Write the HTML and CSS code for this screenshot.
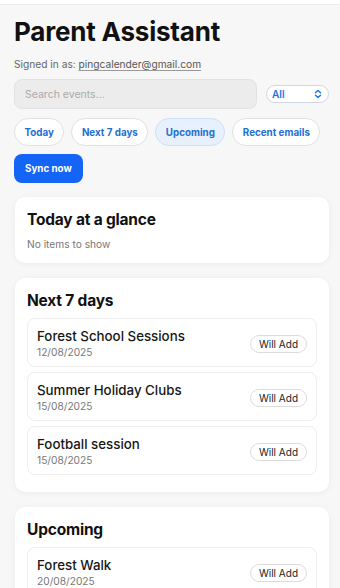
FILE: index.html
```html
<!DOCTYPE html>
<html lang="en">
<head>
<meta charset="utf-8">
<title>Parent Assistant</title>
<link rel="stylesheet" href="styles.css">
</head>
<body>
<div class="topbar"></div>
<main class="page">
  <h1 class="title">Parent Assistant</h1>
  <p class="signed">Signed in as: <a class="email" href="#">pingcalender@gmail.com</a></p>
  <div class="search-row">
    <input class="search" type="text" placeholder="Search events...">
    <div class="select">
      <span>All</span>
      <svg width="8" height="10" viewBox="0 0 8 10" fill="none" stroke="#1a73e8" stroke-width="1.4" stroke-linecap="round" stroke-linejoin="round"><path d="M1.5 3.8 4 1.5 6.5 3.8"/><path d="M1.5 6.2 4 8.5 6.5 6.2"/></svg>
    </div>
  </div>
  <div class="pills">
    <button class="pill">Today</button>
    <button class="pill">Next 7 days</button>
    <button class="pill active">Upcoming</button>
    <button class="pill">Recent emails</button>
  </div>
  <button class="sync">Sync now</button>

  <section class="card">
    <h2 class="card-title">Today at a glance</h2>
    <p class="empty">No items to show</p>
  </section>

  <section class="card">
    <h2 class="card-title">Next 7 days</h2>
    <div class="item">
      <div class="item-text"><div class="item-name">Forest School Sessions</div><div class="item-date">12/08/2025</div></div>
      <span class="badge">Will Add</span>
    </div>
    <div class="item">
      <div class="item-text"><div class="item-name">Summer Holiday Clubs</div><div class="item-date">15/08/2025</div></div>
      <span class="badge">Will Add</span>
    </div>
    <div class="item">
      <div class="item-text"><div class="item-name">Football session</div><div class="item-date">15/08/2025</div></div>
      <span class="badge">Will Add</span>
    </div>
  </section>

  <section class="card">
    <h2 class="card-title">Upcoming</h2>
    <div class="item">
      <div class="item-text"><div class="item-name">Forest Walk</div><div class="item-date">20/08/2025</div></div>
      <span class="badge">Will Add</span>
    </div>
  </section>
</main>
</body>
</html>
```
FILE: styles.css
```css
* { box-sizing: border-box; }
html, body { margin: 0; padding: 0; }
body {
  background: #f7f7f7;
  font-family: Inter, "Noto Sans", sans-serif;
  color: #111;
  height: 588px;
  overflow: hidden;
}
.topbar {
  height: 5px;
  background: #ffffff;
  border-bottom: 1px solid #ececec;
}
.page {
  padding: 0 11px 0 14px;
}
.title {
  margin: 10px 0 0;
  font-size: 26px;
  line-height: 34px;
  font-weight: 700;
  letter-spacing: -0.2px;
  color: #111;
}
.signed {
  margin: 7px 0 0;
  font-size: 10.2px;
  line-height: 16px;
  color: #666;
}
.email {
  color: #555;
  text-decoration: underline;
  text-decoration-color: #999;
  text-underline-offset: 2px;
}
.search-row {
  display: flex;
  align-items: center;
  gap: 9px;
  margin-top: 7px;
}
.search {
  width: 243px;
  height: 30px;
  border: 1px solid #e2e2e2;
  background: #ececec;
  border-radius: 8px;
  padding: 0 10px;
  font-family: inherit;
  font-size: 10.5px;
  color: #333;
  outline: none;
}
.search::placeholder { color: #aaa; }
.select {
  flex: 1;
  height: 18px;
  border: 1px solid #cfd8e3;
  border-radius: 9px;
  background: #fff;
  display: flex;
  align-items: center;
  justify-content: space-between;
  padding: 0 6px 0 5px;
  font-size: 10px;
  font-weight: 600;
  color: #1a73e8;
}
.pills {
  display: flex;
  gap: 7px;
  margin-top: 9px;
}
.pill {
  flex-shrink: 0;
  white-space: nowrap;
  height: 28px;
  padding: 0 9.5px;
  border: 1px solid #e1e1e1;
  background: #fff;
  border-radius: 14px;
  font-family: inherit;
  font-size: 9.8px;
  font-weight: 700;
  color: #1f6fd1;
}
.pill.active {
  background: #e7f0fd;
  border-color: #cfe0f7;
}
.sync {
  display: block;
  margin-top: 8px;
  height: 29px;
  padding: 0 11px;
  border: none;
  border-radius: 8px;
  background: #1464f6;
  color: #fff;
  font-family: inherit;
  font-size: 9.8px;
  font-weight: 700;
}
.card {
  margin: 14px 0 0 1px;
  background: #fff;
  border-radius: 10px;
  padding: 12px 12px 12px;
  box-shadow: 0 1px 6px rgba(0, 0, 0, 0.05);
}
.card + .card { margin-top: 15px; }
.card-title {
  margin: 0 0 6px;
  font-size: 15.5px;
  line-height: 22px;
  font-weight: 700;
  letter-spacing: -0.2px;
  color: #111;
}
.empty {
  margin: 0;
  font-size: 10.2px;
  line-height: 14px;
  color: #777;
}
.item {
  display: flex;
  align-items: center;
  justify-content: space-between;
  border: 1px solid #eeeeee;
  border-radius: 8px;
  padding: 8px 9px 7px 9px;
  margin-bottom: 5px;
  background: #fff;
}
.item-name {
  font-size: 13.3px;
  line-height: 18px;
  font-weight: 550;
  color: #161616;
}
.item-date {
  font-size: 10.2px;
  line-height: 14px;
  color: #777;
}
.badge {
  margin-top: 2px;
  height: 18px;
  line-height: 16px;
  padding: 0 8px;
  border: 1px solid #dcdcdc;
  border-radius: 9px;
  font-size: 10px;
  color: #222;
  background: #fff;
}
```
